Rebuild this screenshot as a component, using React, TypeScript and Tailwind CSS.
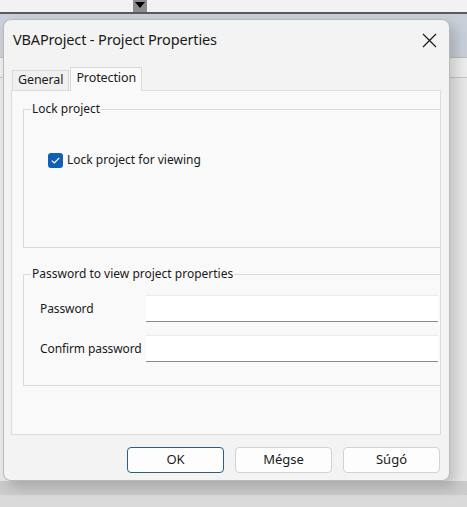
const font = { fontFamily: '"Noto Sans", "Open Sans", sans-serif' }

function Backdrop() {
  return (
    <div className="flex h-full flex-col">
      <div className="flex h-[12px] bg-[#f2f2f2]">
        <div className="ml-[133px] flex h-[12px] w-[14px] items-start justify-center bg-[#8c8c8c] pt-[2px]">
          <div className="h-0 w-0 border-x-[5px] border-t-[6px] border-x-transparent border-t-black" />
        </div>
      </div>
      <div className="h-[2px] bg-[#5a5a5a]" />
      <div className="h-[43px] bg-[#c9d0d9]" />
      <div className="h-[20px] border-t border-[#bdbdbd] bg-[#eeeeee]" />
      <div className="flex-1 border-t border-[#c8c8c8] bg-[#e9e9e9]" />
      <div className="h-[14px] bg-[#cbcbcb]" />
      <div className="h-[12px] bg-[#dadada]" />
    </div>
  )
}

function Field({ label }: { label: string }) {
  return (
    <div className="flex h-[27px] items-center">
      <span className="w-[122px] whitespace-nowrap pl-[16px] text-[12px] tracking-[-0.1px] text-[#1a1a1a]">{label}</span>
      <div className="h-[27px] flex-1 border-t border-[#ececec] border-b border-b-[#8a8a8a] bg-white" />
    </div>
  )
}

function Btn({ children, primary }: { children: string; primary?: boolean }) {
  return (
    <button
      className={
        "h-[26px] w-[97px] rounded-[4px] border bg-[#fdfdfd] text-[13px] text-[#1a1a1a] " +
        (primary ? "border-[#2b5f86]" : "border-[#d2d2d2]")
      }
    >
      {children}
    </button>
  )
}

export default function App() {
  return (
    <div className="relative h-[507px] w-[467px] overflow-hidden" style={font}>
      <Backdrop />

      <div className="absolute left-[3px] top-[19px] flex h-[462px] w-[447px] flex-col rounded-[8px] border border-[#b9b9b9] bg-[#f3f3f3] px-[7px] shadow-[6px_6px_14px_rgba(0,0,0,0.18)]">
        {/* title bar */}
        <div className="flex h-[40px] items-center justify-between">
          <span className="pl-[2px] text-[14.5px] tracking-[-0.15px] text-[#1a1a1a]">VBAProject - Project Properties</span>
          <svg className="mr-[5px]" width="15" height="15" viewBox="0 0 15 15" fill="none">
            <path d="M1 1 L14 14 M14 1 L1 14" stroke="#1a1a1a" strokeWidth="1.2" />
          </svg>
        </div>

        {/* tabs */}
        <div className="mt-[6px] flex items-end">
          <div className="ml-[1px] flex h-[20px] items-center border border-b-0 border-[#d9d9d9] bg-[#f0f0f0] px-[5px] text-[12.5px] tracking-[-0.1px] text-[#1a1a1a]">
            General
          </div>
          <div className="relative top-[1px] z-10 ml-[1px] flex h-[24px] items-center border border-b-0 border-[#d9d9d9] bg-[#f9f9f9] px-[5px] pb-[3px] text-[12.5px] tracking-[-0.1px] text-[#1a1a1a]">
            Protection
          </div>
        </div>

        {/* panel */}
        <div className="flex h-[345px] w-[430px] flex-col overflow-hidden border border-[#dcdcdc] bg-[#f9f9f9] pl-[11px] pt-[9px]">
          <fieldset className="mr-[-2px] h-[148px] border border-[#dadada] px-0">
            <legend className="ml-[7px] px-[1px] text-[12px] leading-[18px] text-[#1a1a1a]">Lock project</legend>
            <div className="mt-[33px] flex items-center pl-[24px]">
              <div className="flex h-[15px] w-[15px] items-center justify-center rounded-[3px] bg-[#0f5fb4]">
                <svg width="9" height="7" viewBox="0 0 9 7" fill="none">
                  <path d="M0.8 3.6 L3.3 6 L8.3 0.8" stroke="white" strokeWidth="1.2" />
                </svg>
              </div>
              <span className="ml-[4px] text-[12px] text-[#1a1a1a]">Lock project for viewing</span>
            </div>
          </fieldset>

          <fieldset className="mr-[-2px] mt-[17px] h-[121px] border border-[#dadada] px-0">
            <legend className="ml-[7px] px-[1px] text-[12px] leading-[18px] text-[#1a1a1a]">
              Password to view project properties
            </legend>
            <div className="mt-[12px] flex flex-col gap-[13px] pr-[3px]">
              <Field label="Password" />
              <Field label="Confirm password" />
            </div>
          </fieldset>
        </div>

        {/* buttons */}
        <div className="mt-[12px] flex justify-end gap-[11px] pr-[2px]">
          <Btn primary>OK</Btn>
          <Btn>Mégse</Btn>
          <Btn>Súgó</Btn>
        </div>
      </div>
    </div>
  )
}
